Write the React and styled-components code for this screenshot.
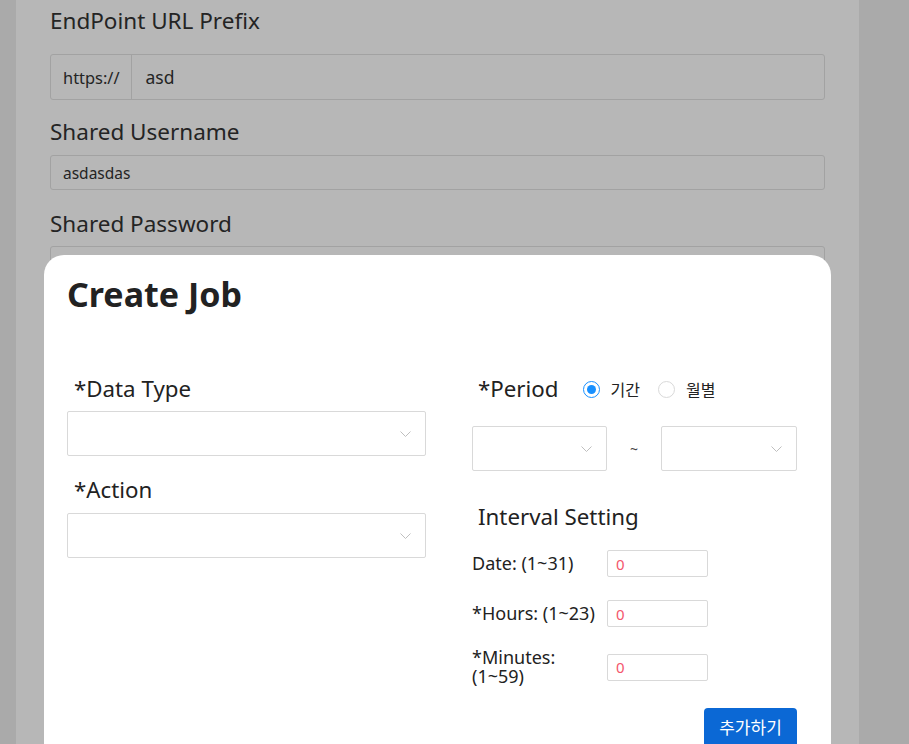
import React, { useState } from 'react';
import styled, { createGlobalStyle } from 'styled-components';

const GlobalStyle = createGlobalStyle`
  html, body {
    margin: 0;
    padding: 0;
    height: 100%;
    overflow: hidden;
  }
  body {
    background-color: #ededed;
    font-family: "Noto Sans", "Noto Sans CJK KR", sans-serif;
    color: #222;
  }
`;

const Page = styled.div`
  height: 744px;
  padding: 0 50px 0 16px;
`;

const SettingsCard = styled.div`
  background-color: #fff;
  height: 100%;
  padding: 0 34px;
  display: flex;
  flex-direction: column;
`;

const FieldLabel = styled.div`
  font-size: 22.5px;
  line-height: 30px;
  color: #333;
  margin-top: ${(props) => props.top}px;
`;

const InputGroup = styled.div`
  display: flex;
  height: 44px;
  margin-top: 18px;
  border: 1px solid #e2e2e2;
  border-radius: 3px;
`;

const Prefix = styled.div`
  display: flex;
  align-items: center;
  padding: 0 12px;
  font-size: 16.4px;
  border-right: 1px solid #e2e2e2;
  color: #333;
`;

const GroupValue = styled.div`
  display: flex;
  align-items: center;
  padding: 0 13px;
  font-size: 17.5px;
  color: #333;
`;

const TextBox = styled.div`
  display: flex;
  align-items: center;
  height: 35px;
  margin-top: ${(props) => props.top || 8}px;
  padding: 0 12px;
  border: 1px solid #e2e2e2;
  border-radius: 3px;
  font-size: 15.5px;
  color: #333;
  box-sizing: border-box;
`;

const Overlay = styled.div`
  position: fixed;
  inset: 0;
  background-color: rgba(0, 0, 0, 0.282);
  padding: 255px 0 0 44px;
`;

const Modal = styled.div`
  width: 787px;
  height: 520px;
  box-sizing: border-box;
  background-color: #fff;
  border-radius: 20px 20px 0 0;
  padding: 20px 34px 0 23px;
`;

const Title = styled.h1`
  margin: 0;
  font-size: 34px;
  line-height: 38px;
  font-weight: 700;
  color: #222;
`;

const Columns = styled.div`
  display: flex;
  gap: 46px;
  margin-top: 61px;
`;

const Column = styled.div`
  width: ${(props) => props.width}px;
  display: flex;
  flex-direction: column;
`;

const Label = styled.div`
  font-size: 22.3px;
  line-height: 30px;
  padding-left: ${(props) => props.indent || 0}px;
  margin-top: ${(props) => props.top || 0}px;
  color: #222;
`;

const SelectBox = styled.div`
  position: relative;
  width: ${(props) => (props.width ? `${props.width}px` : '100%')};
  height: ${(props) => props.height || 45}px;
  margin-top: ${(props) => props.top || 0}px;
  border: 1px solid #d9d9d9;
  border-radius: 2px;
  box-sizing: border-box;
  background: #fff;
`;

const Chevron = styled.svg`
  position: absolute;
  right: 14px;
  top: 50%;
  margin-top: -3px;
`;

const PeriodRow = styled.div`
  display: flex;
  align-items: center;
  height: 30px;
`;

const RadioOption = styled.label`
  display: flex;
  align-items: center;
  gap: 11px;
  margin-left: ${(props) => props.gap}px;
  font-size: 16px;
  color: #222;
  cursor: pointer;
`;

const RadioCircle = styled.span`
  width: 17px;
  height: 17px;
  box-sizing: border-box;
  border-radius: 50%;
  border: 1px solid ${(props) => (props.checked ? '#1890ff' : '#d9d9d9')};
  display: flex;
  align-items: center;
  justify-content: center;
  &::after {
    content: '';
    width: 9px;
    height: 9px;
    border-radius: 50%;
    background-color: #1890ff;
    display: ${(props) => (props.checked ? 'block' : 'none')};
  }
`;

const RangeRow = styled.div`
  display: flex;
  align-items: center;
  margin-top: 22px;
`;

const Tilde = styled.div`
  width: 55px;
  text-align: center;
  font-size: 14px;
  color: #444;
`;

const IntervalRow = styled.div`
  display: flex;
  align-items: center;
  margin-top: ${(props) => props.top}px;
`;

const IntervalLabel = styled.div`
  width: 128px;
  margin-right: 7px;
  font-size: 18px;
  line-height: 19px;
  color: #222;
`;

const NumberInput = styled.input`
  width: 101px;
  height: 27px;
  box-sizing: border-box;
  border: 1px solid #d9d9d9;
  border-radius: 2px;
  padding: 0 8px;
  font-family: inherit;
  font-size: 15px;
  color: #f4566c;
  outline: none;
`;

const Footer = styled.div`
  display: flex;
  justify-content: flex-end;
  margin-top: 22px;
`;

const AddButton = styled.button`
  width: 93px;
  height: 40px;
  border: none;
  border-radius: 4px;
  background-color: #0b68d5;
  color: #fff;
  font-family: inherit;
  font-size: 17px;
  padding: 0 0 4px;
  cursor: pointer;
`;

function Select({ width, height, top }) {
  return (
    <SelectBox width={width} height={height} top={top}>
      <Chevron width="11" height="6" viewBox="0 0 11 6">
        <path d="M0.5 0.5 L5.5 5.5 L10.5 0.5" fill="none" stroke="#bfbfbf" strokeWidth="1" />
      </Chevron>
    </SelectBox>
  );
}

function App() {
  const [period, setPeriod] = useState('range');
  const [interval, setInterval] = useState({ date: '0', hours: '0', minutes: '0' });

  const handleChange = (event) => {
    setInterval({ ...interval, [event.target.name]: event.target.value });
  };

  return (
    <>
      <GlobalStyle />
      <Page>
        <SettingsCard>
          <FieldLabel top={6}>EndPoint URL Prefix</FieldLabel>
          <InputGroup>
            <Prefix>https://</Prefix>
            <GroupValue>asd</GroupValue>
          </InputGroup>
          <FieldLabel top={17}>Shared Username</FieldLabel>
          <TextBox>asdasdas</TextBox>
          <FieldLabel top={19}>Shared Password</FieldLabel>
          <TextBox top={7} />
        </SettingsCard>
      </Page>

      <Overlay>
        <Modal>
          <Title>Create Job</Title>
          <Columns>
            <Column width={359}>
              <Label indent={7}>*Data Type</Label>
              <Select top={7} />
              <Label indent={7} top={19}>*Action</Label>
              <Select top={8} />
            </Column>

            <Column width={325}>
              <PeriodRow>
                <Label indent={6}>*Period</Label>
                <RadioOption gap={24} onClick={() => setPeriod('range')}>
                  <RadioCircle checked={period === 'range'} />
                  기간
                </RadioOption>
                <RadioOption gap={18} onClick={() => setPeriod('month')}>
                  <RadioCircle checked={period === 'month'} />
                  월별
                </RadioOption>
              </PeriodRow>
              <RangeRow>
                <Select width={135} height={45} />
                <Tilde>~</Tilde>
                <Select width={136} height={45} />
              </RangeRow>

              <Label indent={6} top={31}>Interval Setting</Label>
              <IntervalRow top={18}>
                <IntervalLabel>Date: (1~31)</IntervalLabel>
                <NumberInput name="date" value={interval.date} onChange={handleChange} />
              </IntervalRow>
              <IntervalRow top={23}>
                <IntervalLabel>*Hours: (1~23)</IntervalLabel>
                <NumberInput name="hours" value={interval.hours} onChange={handleChange} />
              </IntervalRow>
              <IntervalRow top={21}>
                <IntervalLabel>*Minutes: (1~59)</IntervalLabel>
                <NumberInput name="minutes" value={interval.minutes} onChange={handleChange} />
              </IntervalRow>
              <Footer>
                <AddButton type="button">추가하기</AddButton>
              </Footer>
            </Column>
          </Columns>
        </Modal>
      </Overlay>
    </>
  );
}

export default App;
